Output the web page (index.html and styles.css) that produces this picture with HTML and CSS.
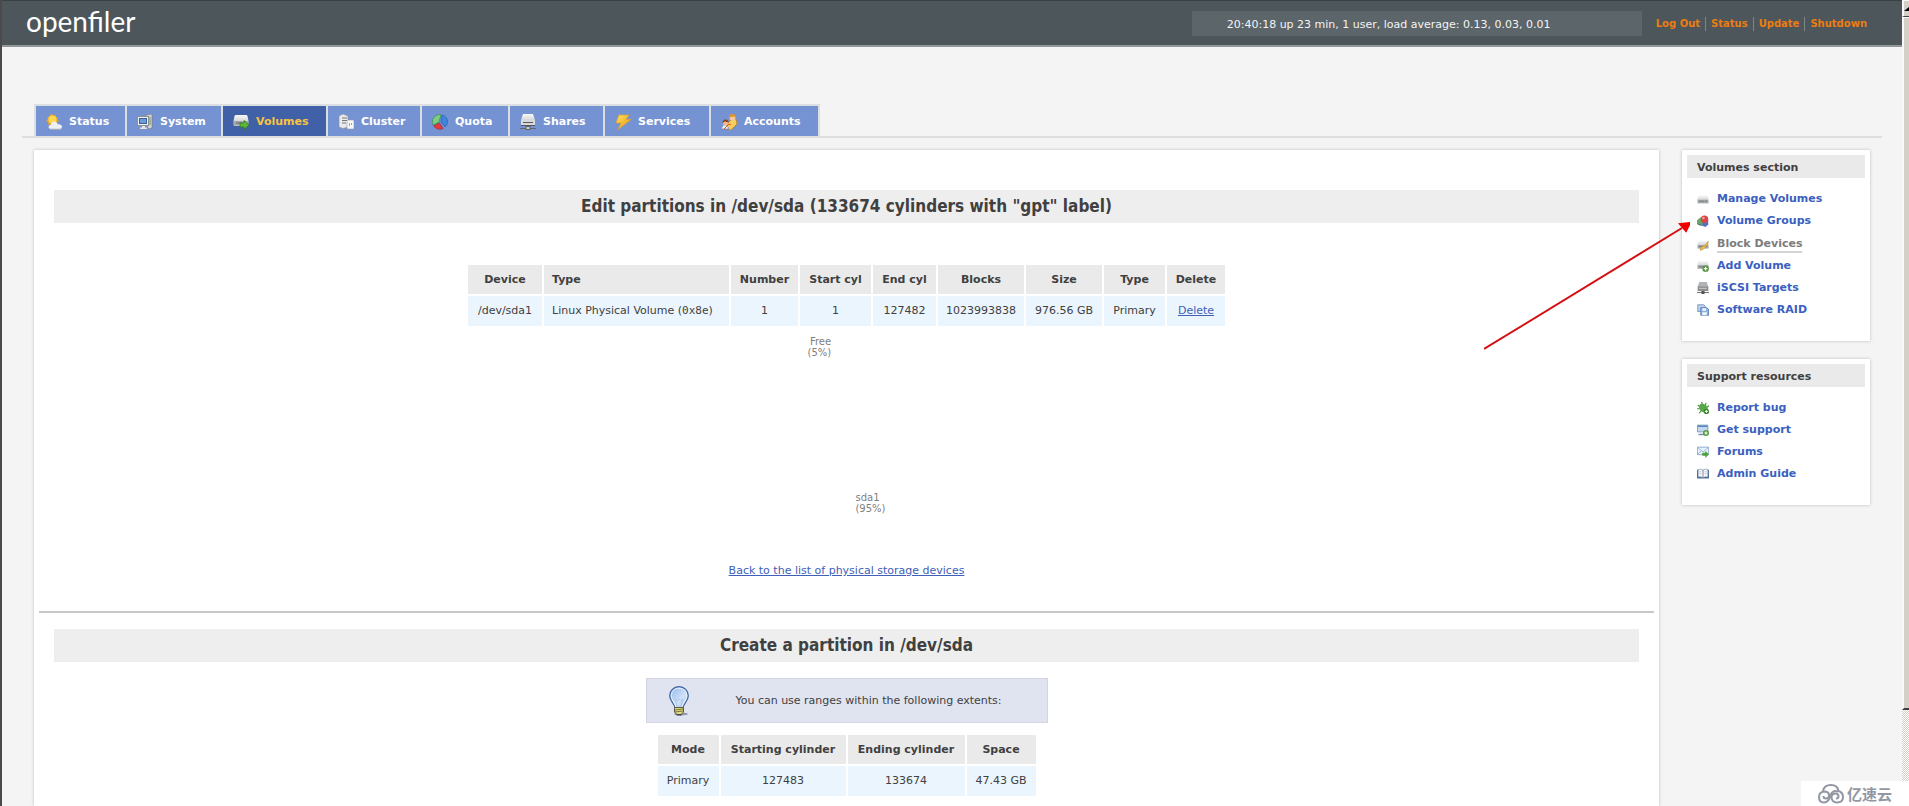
FILE: index.html
```html
<!DOCTYPE html>
<html lang="en">
<head>
<meta charset="utf-8">
<title>Openfiler Volumes</title>
<link rel="stylesheet" href="styles.css">
</head>
<body>
<svg class="defs" aria-hidden="true">
  <defs>
    <linearGradient id="metal" x1="0" y1="0" x2="0" y2="1"><stop offset="0" stop-color="#fafafa"/><stop offset="1" stop-color="#b4b8ba"/></linearGradient>
    <linearGradient id="gold" x1="0" y1="0" x2="1" y2="1"><stop offset="0" stop-color="#ffe45c"/><stop offset="1" stop-color="#e8930c"/></linearGradient>
    <linearGradient id="glass" x1="0" y1="0" x2="1" y2="1"><stop offset="0" stop-color="#8fb6ea"/><stop offset=".6" stop-color="#cfe2fa"/><stop offset="1" stop-color="#9dbbe6"/></linearGradient>
    <symbol id="drive" viewBox="0 0 16 16"><path d="M3 3h10q1 0 1.500 1l1 5v4q0 1-1 1h-13q-1 0-1-1V9l1-5Q2 3 3 3z" fill="url(#metal)"/><path d="M1 9h14v4H1z" fill="#a4a8aa"/><path d="M3 11h6" stroke="#666"/><path d="M11 11h2" stroke="#555"/></symbol>
  </defs>
</svg>
<div class="page">
  <header class="topbar">
    <a class="logo" href="#">openfiler</a>
    <p class="uptime">20:40:18 up 23 min, 1 user, load average: 0.13, 0.03, 0.01</p>
    <ul class="quick">
      <li><a href="#">Log Out</a></li>
      <li><a href="#">Status</a></li>
      <li><a href="#">Update</a></li>
      <li><a href="#">Shutdown</a></li>
    </ul>
  </header>

  <nav class="tabs">
    <ul class="tablist">
      <li><a class="tab" href="#"><svg class="ico" viewBox="0 0 16 16"><path d="M6 0l1.300 1.500L9.500 1l.5 2 2 .5-.5 2L13 7l-2 1-5 4-2-1-2-.5.500-2L0 6.500 2 5l-.5-2 2-.3L4 .800z" fill="#e8a52c"/><circle cx="6.500" cy="5.500" r="4" fill="#ffd84f"/><path d="M5 15q-2.500 0-2.500-2t2.500-2.300q.5-3.200 3.500-3.200 2.500 0 3.300 2.700Q16 10 16 12.800 15.800 15 14 15z" fill="#eef1f4"/><path d="M4 15.200h11" stroke="#b3b6bd"/></svg>Status</a></li>
      <li><a class="tab" href="#"><svg class="ico" viewBox="0 0 16 16"><path d="M9 1l6-1v14l-4 1z" fill="#d4d6d0" stroke="#777" stroke-width=".6"/><path d="M13 3v8" stroke="#7a8a5a"/><rect x=".5" y="2.500" width="11" height="9" fill="#f1f1ee" stroke="#8a9094"/><rect x="2.500" y="4.500" width="7" height="5" fill="#6d9bd8" stroke="#38629b"/><path d="M5 12h3v1.500h2V15H3v-1.500h2z" fill="#e4e4e0"/></svg>System</a></li>
      <li><a class="tab current" href="#"><svg class="ico" viewBox="0 0 16 16"><use href="#drive" y="-2"/><path d="M7 9h4V6.500l5 4.500-5 4.500V13H7z" fill="#62b53c" stroke="#2f7d1c" stroke-width=".8"/></svg>Volumes</a></li>
      <li><a class="tab" href="#"><svg class="ico" viewBox="0 0 16 16"><path d="M1 2l4-2 5 2v11l-5 1.500-4-1.500z" fill="#e9eaec" stroke="#8b8f99" stroke-width=".6"/><path d="M4 4h5M4 6.500h5M4 9h4" stroke="#777"/><path d="M10 6h5q1 0 1 1v7q0 1-1 1h-5q-1 0-1-1V7q0-1 1-1z" fill="#f7f7f7" stroke="#9a9ea8" stroke-width=".6"/><path d="M11.500 9v3M13.500 9v2" stroke="#a3a3a3"/></svg>Cluster</a></li>
      <li><a class="tab" href="#"><svg class="ico" viewBox="0 0 16 16"><path d="M7 8L1 11Q-1 5 3.500 2 6 0 9 .500z" fill="#7ecb83" stroke="#2f8a3e" stroke-width=".6"/><path d="M9 8l1-7q5 1 5.500 6.500Q15.500 11 13 13z" fill="#3e86dc" stroke="#2358a5" stroke-width=".6"/><path d="M7.500 9l3.500 5.500q-5 2.500-9.500-2.500z" fill="#e23b3b" stroke="#a51d22" stroke-width=".6"/></svg>Quota</a></li>
      <li><a class="tab" href="#"><svg class="ico" viewBox="0 0 16 16"><path d="M3 0h10l2 6v5H1V6z" fill="url(#metal)"/><path d="M1 6h14v5H1z" fill="#d8dadb"/><path d="M3 8.500h10" stroke="#55595c"/><path d="M1 11.500h14" stroke="#555"/><path d="M0 14.500h16" stroke="#656a6d"/><rect x="6" y="12.500" width="4" height="3" fill="#ccc" stroke="#555" stroke-width=".8"/></svg>Shares</a></li>
      <li><a class="tab" href="#"><svg class="ico" viewBox="0 0 16 16"><path d="M4 1h10l-3 4.500h5L3 15.500 6 9H1z" fill="url(#gold)" stroke="#e0a02c" stroke-width=".7"/></svg>Services</a></li>
      <li><a class="tab" href="#"><svg class="ico" viewBox="0 0 16 16"><path d="M7 9l3-3 5-1 1 5-6 6-5-1z" fill="#f8cf5c" stroke="#b77b19" stroke-width=".7"/><circle cx="11.500" cy="3.800" r="3" fill="#f7c99c"/><path d="M8 4q-.5-4 3.500-4t3.500 4l-2-1.500-3 .5z" fill="#e0922a"/><path d="M0 15l2-4 4 0 2 4z" fill="#eaf0fa" stroke="#6881b5" stroke-width=".7"/><circle cx="4.500" cy="9" r="2.500" fill="#f5bb8e"/><path d="M1.500 9q0-3.500 3-3.500T7.500 8.500L4 7.500z" fill="#8d4417"/><path d="M3 15l5-5 2 1" fill="none" stroke="#d8562a"/></svg>Accounts</a></li>
    </ul>
  </nav>

  <div class="columns">
    <main class="panel">
      <section class="block">
        <h1 class="title">Edit partitions in /dev/sda (133674 cylinders with "gpt" label)</h1>
        <table class="grid partitions">
          <colgroup><col class="c-device"><col class="c-kind"><col class="c-number"><col class="c-start"><col class="c-end"><col class="c-blocks"><col class="c-size"><col class="c-type"><col class="c-delete"></colgroup>
          <thead><tr><th>Device</th><th class="left">Type</th><th>Number</th><th>Start cyl</th><th>End cyl</th><th>Blocks</th><th>Size</th><th>Type</th><th>Delete</th></tr></thead>
          <tbody><tr><td>/dev/sda1</td><td class="left">Linux Physical Volume (<code>0x8e</code>)</td><td>1</td><td>1</td><td>127482</td><td>1023993838</td><td>976.56 GB</td><td>Primary</td><td><a class="link" href="#">Delete</a></td></tr></tbody>
        </table>
        <div class="chart">
          <p class="slice free">Free<br>(5%)</p>
          <p class="slice used">sda1<br>(95%)</p>
        </div>
        <p class="back"><a class="link" href="#">Back to the list of physical storage devices</a></p>
      </section>
      <hr class="rule">
      <section class="block">
        <h2 class="title">Create a partition in /dev/sda</h2>
        <div class="note">
          <svg class="bulb" viewBox="0 0 20 30"><ellipse cx="12" cy="28" rx="7" ry="1.500" fill="#8f95a8"/><path d="M10 .700C4.500.700.700 4.800.700 9.800c0 5 4.300 7 5.300 12.200h8c1-5.200 5.300-7.200 5.300-12.200C19.300 4.800 15.500.700 10 .700z" fill="url(#glass)" stroke="#41639c" stroke-width="1.200"/><path d="M10 2.300c-4.500 0-7.700 3.300-7.700 7.500 0 4 3.500 6.200 4.900 11M10 2.300c4.500 0 7.700 3.300 7.700 7.500 0 4-3.500 6.200-4.900 11" fill="none" stroke="#e9f2fd"/><path d="M8 21L6.500 13l2 1.500 1.500-1.500 1.500 1.500 2-1.500L12 21" fill="none" stroke="#a9bfdf" stroke-width=".8"/><path d="M5.500 21.500h9V26l-2.500 2.500H8L5.500 26z" fill="#e2dc7d" stroke="#5a5a3c"/><path d="M6 24l8-1M6 26l8-1" stroke="#77733c"/><path d="M7.500 28h5v1.500h-5z" fill="#3f4552"/></svg>
          <p class="note-text">You can use ranges within the following extents:</p>
        </div>
        <table class="grid extents">
          <colgroup><col class="c-mode"><col class="c-from"><col class="c-to"><col class="c-space"></colgroup>
          <thead><tr><th>Mode</th><th>Starting cylinder</th><th>Ending cylinder</th><th>Space</th></tr></thead>
          <tbody><tr><td>Primary</td><td>127483</td><td>133674</td><td>47.43 GB</td></tr></tbody>
        </table>
      </section>
    </main>

    <aside class="side">
      <section class="card">
        <h3 class="card-title">Volumes section</h3>
        <ul class="menu">
          <li><svg class="mini" viewBox="0 0 16 16"><use href="#drive"/></svg><a href="#">Manage Volumes</a></li>
          <li><svg class="mini" viewBox="0 0 16 16"><path d="M0 7l5-4 4 3v7l-5 1-4-2z" fill="#65a765"/><path d="M8 9l7-2v6l-4 3-5-2z" fill="#5078b9"/><circle cx="10" cy="5.500" r="5" fill="#dc4548"/><circle cx="8.500" cy="4" r="1.800" fill="#f59a94"/><path d="M1 12l5 2" stroke="#555"/></svg><a href="#">Volume Groups</a></li>
          <li class="active"><svg class="mini" viewBox="0 0 16 16"><use href="#drive" y="-1"/><path d="M15 3l-1 5-6 6-4 1 2-5 4-1z" fill="#edbf42" stroke="#a9812a" stroke-width=".7"/></svg><a class="here" href="#">Block Devices</a></li>
          <li><svg class="mini" viewBox="0 0 16 16"><use href="#drive" y="-2"/><circle cx="11.500" cy="11.500" r="4.300" fill="#4f8f37"/><path d="M9 11.500h5M11.500 9v5" stroke="#fff" stroke-width="1.700"/></svg><a href="#">Add Volume</a></li>
          <li><svg class="mini" viewBox="0 0 16 16"><path d="M3 0h10l2 6v5H1V6z" fill="#b1b3b5"/><path d="M1 6h14v6H1z" fill="#8c9092"/><path d="M3 8.500h10" stroke="#ddd"/><path d="M0 14h16" stroke="#777" stroke-width="1.500"/><path d="M6 12h4v4H6z" fill="#555"/></svg><a href="#">iSCSI Targets</a></li>
          <li><svg class="mini" viewBox="0 0 16 16"><path d="M1 1h8l2 2v7H1z" fill="#bdd3ee" stroke="#6386bc"/><path d="M5 5h8l2.500 2v8H5z" fill="#8fb3e0" stroke="#4169a7"/><path d="M7 5.500h5V9H7zM7 11h6v4H7z" fill="#f1f6fc"/></svg><a href="#">Software RAID</a></li>
        </ul>
      </section>
      <section class="card">
        <h3 class="card-title">Support resources</h3>
        <ul class="menu">
          <li><svg class="mini" viewBox="0 0 16 16"><path d="M1 4l4 3M6 0l2 5M12 1l-1 5M0 9h5M3 15l3-4M16 5l-4 3" stroke="#4a963d" stroke-width="1.600"/><ellipse cx="8.500" cy="8" rx="6.500" ry="5" transform="rotate(45 8.500 8)" fill="#58a848"/><circle cx="12.500" cy="12.500" r="3.500" fill="#37822b"/><path d="M10.500 12.500h4M12.500 10.500v4" stroke="#fff" stroke-width="1.300"/></svg><a href="#">Report bug</a></li>
          <li><svg class="mini" viewBox="0 0 16 16"><path d="M.5 1.500h14v9H.500z" fill="#c3d8ee" stroke="#6586a9"/><path d="M1 3h13" stroke="#5587c1" stroke-width="2"/><path d="M2 14h8" stroke="#718da8" stroke-width="2"/><circle cx="12" cy="12" r="4" fill="#569c45"/><path d="M10 12h4M12 10v4" stroke="#fff" stroke-width="1.400"/></svg><a href="#">Get support</a></li>
          <li><svg class="mini" viewBox="0 0 16 16"><path d="M.5 1.500h15v10H.500z" fill="#e8f2fc" stroke="#7297c2"/><path d="M1 2l7 6 7-6M1 11l5-5" fill="none" stroke="#8babd0"/><path d="M7 9h4V6.500l5 4.500-5 5v-3H7z" fill="#52a23e"/></svg><a href="#">Forums</a></li>
          <li><svg class="mini" viewBox="0 0 16 16"><path d="M0 2.500h16V14H0z" fill="#526e9c"/><path d="M1.500 2q4-1.500 6.500 1 2.500-2.500 6.500-1v10Q11 11 8 13q-3-2-6.500-1z" fill="#f5f7fa" stroke="#61779d" stroke-width=".7"/><path d="M8 3v10" stroke="#667"/><path d="M3 5h3M3 7.500h3M10 5h3M10 7.500h3" stroke="#b8bfcb"/></svg><a href="#">Admin Guide</a></li>
        </ul>
      </section>
      <svg class="arrow" viewBox="0 0 206 130" aria-hidden="true"><path d="M0 127L198 6" stroke="#d40f12" stroke-width="2"/><path d="M206 1l-4 8-6-7z" fill="#f00000" stroke="#f00000" stroke-width="2"/></svg>
    </aside>
  </div>
</div>

<div class="scroller" aria-hidden="true">
  <span class="scroll-up"><svg class="scroll-mark" viewBox="0 0 5 4"><path d="M0 4L5 0v4z" fill="#000"/></svg></span>
  <span class="scroll-thumb"></span>
</div>
<div class="stamp">
  <svg class="cloud" viewBox="0 0 26 20"><g fill="none" stroke="#9297a3" stroke-width="2"><path d="M5 7Q6 1 13 1q6.500 0 7.500 6Q25 8.500 25 13q0 5.500-6 5.500-5 0-5.500-5 0-4 4-4 3 0 3 3 0 2-2.500 2"/><path d="M20 7.500Q15 5.500 12.500 11q-1.500 7.500-6.500 7.500-5 0-5-5.500 0-5.500 6-5.500 4 .5 4 4 0 3-3 3-2.500 0-2.500-2.500"/></g></svg>
  <span>亿速云</span>
</div>
</body>
</html>
```
FILE: styles.css
```css
* { box-sizing: border-box; }

body {
  display: flex;
  height: 100vh;
  margin: 0;
  overflow: hidden;
  background: #f4f4f4;
  color: #404040;
  font: 11px/14px "DejaVu Sans", Verdana, sans-serif;
}
h1, h2, h3, p, ul { margin: 0; padding: 0; }
ul { list-style: none; }
a { text-decoration: none; }

.defs { position: absolute; width: 0; height: 0; }

.page {
  display: flex;
  flex: 1;
  flex-direction: column;
  border-left: 2px solid #4a4a4a;
}

/* Top bar */
.topbar {
  display: flex;
  align-items: center;
  height: 47px;
  padding: 0 35px 0 24px;
  border-top: 1px solid #3a4145;
  border-bottom: 2px solid #929798;
  background: #4d565b;
}
.logo {
  margin-right: auto;
  padding-bottom: 4px;
  color: #fff;
  font: 28px/32px Lato, sans-serif;
}
.uptime {
  width: 450px;
  padding: 7px 0 4px 35px;
  background: #5c656a;
  color: #f4f4f4;
}
.quick { display: flex; margin-left: 9px; padding-top: 2px; }
.quick li {
  padding: 0 5px;
  border-left: 1px solid #7d868b;
  font-size: 10px;
  font-weight: bold;
}
.quick li:first-child { border-left: 0; }
.quick li:last-child { padding-right: 0; }
.quick a { color: #ec7d11; }

/* Tabs */
.tabs {
  display: flex;
  margin: 57px 20px 0;
  padding-left: 12px;
  border-bottom: 2px solid #dedede;
}
.tablist {
  display: grid;
  grid-template-columns: 89px 94px 103px 92px 86px 93px 104px 107px;
  gap: 2px;
  padding: 2px 2px 0;
  background: #dcdfe2;
}
.tab {
  display: flex;
  align-items: center;
  gap: 7px;
  height: 30px;
  padding: 2px 0 0 10px;
  background: #7592d3;
  color: #fff;
  font-weight: bold;
}
.tab.current { background: #4060a8; color: #f8c440; }
.ico { width: 16px; height: 16px; }

/* Columns */
.columns {
  display: grid;
  flex: 1;
  grid-template-columns: 1fr 188px;
  gap: 23px;
  margin: 12px 32px 0;
}
.panel {
  padding: 40px 5px 0;
  background: #fff;
  box-shadow: 0 0 3px #bbb;
}
.block { padding: 0 15px; }
.title {
  padding: 6px 0 7px;
  background: #eee;
  font: bold 17px/20px "DejaVu Sans Condensed", Tahoma, "DejaVu Sans", sans-serif;
  text-align: center;
}
.link { color: #4060b8; text-decoration: underline; }

.grid { margin: 0 auto; border-spacing: 2px; }
.grid th, .grid td { padding: 8px 4px; text-align: center; white-space: nowrap; }
.grid th { padding-bottom: 7px; background: #eaeaea; }
.grid td { background: #ebf5fe; }
.grid .left { padding-left: 8px; text-align: left; }
.partitions { margin-top: 40px; }
.grid code { font: 11px/12px "DejaVu Sans Mono", monospace; }
.c-device { width: 74px; }
.c-kind { width: 185px; }
.c-number { width: 67px; }
.c-start { width: 71px; }
.c-end { width: 63px; }
.c-blocks { width: 86px; }
.c-size { width: 76px; }
.c-type { width: 61px; }
.c-delete { width: 58px; }
.c-mode { width: 61px; }
.c-from { width: 125px; }
.c-to { width: 117px; }
.c-space { width: 69px; }

.chart {
  display: flex;
  flex-direction: column;
  justify-content: space-between;
  width: 78px;
  height: 178px;
  margin: 8px auto 0;
  color: #808080;
  font-size: 10px;
  line-height: 11px;
}
.slice.free { align-self: flex-start; text-align: right; }
.slice.used { align-self: flex-end; }
.back { margin-top: 50px; text-align: center; }
.rule {
  height: 2px;
  margin: 33px 0 16px;
  border: 0;
  background: #c8c8c8;
}

.note {
  display: flex;
  align-items: center;
  width: 402px;
  height: 45px;
  margin: 16px auto 10px;
  padding: 0 22px;
  border: 1px solid #d4d4e2;
  background: #e0e4f0;
}
.bulb { width: 20px; height: 30px; }
.note-text { flex: 1; padding-left: 24px; text-align: center; }

/* Sidebar */
.side {
  position: relative;
  display: flex;
  flex-direction: column;
  gap: 18px;
}
.card {
  padding: 5px 5px 20px;
  background: #fff;
  box-shadow: 0 0 3px #bbb;
}
.card-title {
  padding: 6px 10px 3px;
  background: #eaeaea;
  font-size: 11px;
  line-height: 14px;
}
.menu { padding: 10px 10px 0; }
.menu li {
  display: flex;
  align-items: center;
  gap: 8px;
  min-height: 22px;
  font-weight: bold;
}
.menu .active { min-height: 23px; padding-top: 2px; }
.menu a { color: #3a60c0; }
.menu .here { border-bottom: 2px solid #d4d4d4; color: #7c7c7c; }
.mini { width: 12px; height: 12px; }

.arrow {
  position: absolute;
  top: 72px;
  right: 180px;
  width: 206px;
  height: 130px;
}

/* Window scrollbar */
.scroller {
  display: flex;
  flex-direction: column;
  width: 7px;
  background: repeating-conic-gradient(#d4d0c8 0 25%, #fff 0 50%) 0 0 / 2px 2px;
}
.scroll-up, .scroll-thumb {
  border: solid #f8f8f8;
  border-width: 1px 0 0 2px;
  background: #d4d0c8;
}
.scroll-up { height: 17px; padding-top: 6px; border-bottom: 1px solid #404040; }
.scroll-mark { display: block; width: 5px; height: 4px; }
.scroll-thumb { flex: 0 0 86%; border-bottom: 2px solid #404040; }

.stamp {
  position: absolute;
  right: 0;
  bottom: 0;
  display: flex;
  align-items: center;
  gap: 3px;
  height: 25px;
  padding: 0 17px;
  background: #fff;
  color: #9297a3;
  font: bold 15px/24px "Noto Sans CJK SC", sans-serif;
}
.cloud { width: 26px; height: 20px; }
```
